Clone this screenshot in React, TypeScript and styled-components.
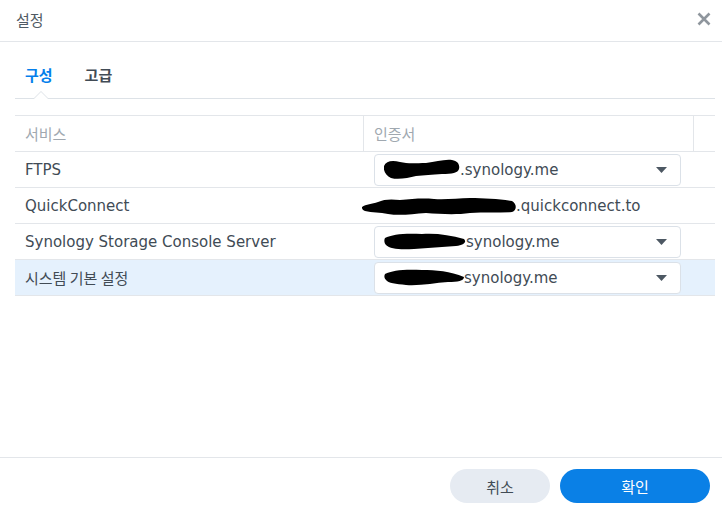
import * as React from "react";
import styled, { createGlobalStyle } from "styled-components";

const GlobalStyle = createGlobalStyle`
  html, body {
    margin: 0;
    padding: 0;
    background: #ffffff;
  }
  body {
    font-family: "DejaVu Sans", "Noto Sans CJK KR", sans-serif;
    color: #414b55;
  }
`;

const Dialog = styled.div`
  width: 722px;
  height: 507px;
  display: flex;
  flex-direction: column;
  background: #ffffff;
  box-sizing: border-box;
`;

const TitleBar = styled.div`
  height: 42px;
  box-sizing: border-box;
  border-bottom: 1px solid #e3e6ea;
  display: flex;
  align-items: center;
  justify-content: space-between;
  padding: 0 10px 3px 16px;
`;

const Title = styled.div`
  font-family: "Noto Sans CJK KR", sans-serif;
  font-size: 15px;
  color: #505a64;
`;

const CloseButton = styled.button`
  border: none;
  background: none;
  padding: 0;
  width: 16px;
  height: 16px;
  display: flex;
  align-items: center;
  justify-content: center;
  cursor: pointer;
`;

const Body = styled.div`
  flex: 1;
  padding: 0 7px 0 15px;
  display: flex;
  flex-direction: column;
`;

const TabBar = styled.div`
  height: 57px;
  box-sizing: border-box;
  border-bottom: 1px solid #dde2e7;
  display: flex;
  align-items: flex-end;
`;

const Tab = styled.div<{ $active?: boolean }>`
  position: relative;
  font-family: "Noto Sans CJK KR", sans-serif;
  font-size: 15px;
  font-weight: 600;
  color: ${(p) => (p.$active ? "#057feb" : "#414b55")};
  padding: 0 22px 0 10px;
  height: 33px;
  line-height: 20px;
  cursor: pointer;
`;

const Caret = styled.span`
  position: absolute;
  left: 18px;
  bottom: -1px;
  width: 0;
  height: 0;
  border-left: 8px solid transparent;
  border-right: 8px solid transparent;
  border-bottom: 8px solid #dde2e7;

  &::after {
    content: "";
    position: absolute;
    left: -7px;
    top: 1px;
    border-left: 7px solid transparent;
    border-right: 7px solid transparent;
    border-bottom: 7px solid #ffffff;
  }
`;

const Grid = styled.div`
  margin-top: 16px;
  border-top: 1px solid #e3e6ea;
`;

const Row = styled.div<{ $selected?: boolean }>`
  display: grid;
  grid-template-columns: 349px 330px 1fr;
  height: 36px;
  box-sizing: border-box;
  border-bottom: 1px solid #e3e6ea;
  background: ${(p) => (p.$selected ? "#e5f1fd" : "transparent")};
`;

const Cell = styled.div<{ $divider?: boolean; $header?: boolean; $flush?: boolean }>`
  display: flex;
  align-items: center;
  padding-left: ${(p) => (p.$flush ? 0 : 10)}px;
  font-size: 15px;
  color: ${(p) => (p.$header ? "#a0a8b0" : "#414b55")};
  font-family: ${(p) =>
    p.$header ? '"Noto Sans CJK KR", sans-serif' : '"DejaVu Sans", "Noto Sans CJK KR", sans-serif'};
  border-right: ${(p) => (p.$divider ? "1px solid #e3e6ea" : "none")};
  white-space: nowrap;
`;

const KoText = styled.span`
  font-family: "Noto Sans CJK KR", sans-serif;
  font-size: 15px;
`;

const Select = styled.div`
  width: 307px;
  height: 32px;
  box-sizing: border-box;
  border: 1px solid #dbe1e8;
  border-radius: 4px;
  background: #ffffff;
  display: flex;
  align-items: center;
  padding: 0 13px 0 9px;
`;

const SelectValue = styled.div`
  flex: 1;
  display: flex;
  align-items: center;
  font-size: 15px;
  color: #414b55;
`;

const Footer = styled.div`
  height: 50px;
  box-sizing: border-box;
  border-top: 1px solid #e3e6ea;
  display: flex;
  justify-content: flex-end;
  align-items: flex-start;
  gap: 10px;
  padding: 11px 12px 0 0;
`;

const Button = styled.button<{ $primary?: boolean; $w: number }>`
  width: ${(p) => p.$w}px;
  height: 34px;
  border: none;
  border-radius: 17px;
  font-family: "Noto Sans CJK KR", sans-serif;
  font-size: 15px;
  cursor: pointer;
  background: ${(p) => (p.$primary ? "#0a80e6" : "#e6ebf2")};
  color: ${(p) => (p.$primary ? "#ffffff" : "#414b55")};
`;

// redaction scribbles over the host names
const blobPaths = [
  "M0 7 C2 2 8 1 16 3 C24 5 32 4 42 4 C52 3 60 0 68 1 C74 2 76 6 75 10 C74 14 68 15 58 15 C48 16 40 16 32 17 C24 19 14 21 7 19 C2 17 -1 12 0 7 Z",
  "M0 11 C4 8 10 8 16 6 C22 3 30 3 38 4 C50 3 60 2 72 3 C84 4 96 2 108 2 C122 2 138 3 150 5 C155 8 155 14 150 16 C136 17 122 16 108 17 C94 19 78 18 64 17 C50 18 38 20 26 18 C18 16 10 17 3 15 C0 14 0 12 0 11 Z",
  "M1 5 C8 1 22 0 38 1 C52 0 66 2 80 6 C83 9 80 12 72 13 C58 14 44 15 30 16 C16 17 6 16 2 12 C0 10 0 7 1 5 Z",
  "M1 5 C8 1 22 0 38 1 C52 1 66 2 80 8 C80 12 74 13 64 13 C50 14 36 17 22 16 C12 15 4 14 2 11 C0 9 0 7 1 5 Z",
];

const Blob = ({ w, h, variant }: { w: number; h: number; variant: number }) => (
  <svg width={w} height={h} viewBox={`0 0 ${w} ${h}`} style={{ flexShrink: 0 }}>
    <path d={blobPaths[variant]} fill="#000000" />
  </svg>
);

const Arrow = () => (
  <svg width="11" height="6" viewBox="0 0 11 6">
    <path d="M0 0 L11 0 L5.5 6 Z" fill="#4d5863" />
  </svg>
);

const CloseIcon = () => (
  <svg width="14" height="14" viewBox="0 0 14 14">
    <path d="M1.5 1.5 L12.5 12.5 M12.5 1.5 L1.5 12.5" stroke="#8f969d" strokeWidth="2.6" />
  </svg>
);

type Entry = {
  service: string;
  ko?: boolean;
  select: boolean;
  blobW: number;
  blobH: number;
  variant: number;
  suffix: string;
  selected?: boolean;
};

const rows: Entry[] = [
  { service: "FTPS", select: true, blobW: 76, blobH: 21, variant: 0, suffix: ".synology.me" },
  { service: "QuickConnect", select: false, blobW: 154, blobH: 20, variant: 1, suffix: ".quickconnect.to" },
  { service: "Synology Storage Console Server", select: true, blobW: 82, blobH: 17, variant: 2, suffix: "synology.me" },
  { service: "시스템 기본 설정", ko: true, select: true, blobW: 80, blobH: 17, variant: 3, suffix: "synology.me", selected: true },
];

export default function App() {
  return (
    <>
      <GlobalStyle />
      <Dialog>
        <TitleBar>
          <Title>설정</Title>
          <CloseButton aria-label="닫기">
            <CloseIcon />
          </CloseButton>
        </TitleBar>
        <Body>
          <TabBar>
            <Tab $active>
              구성
              <Caret />
            </Tab>
            <Tab>고급</Tab>
          </TabBar>
          <Grid>
            <Row>
              <Cell $header $divider>서비스</Cell>
              <Cell $header $divider>인증서</Cell>
              <Cell />
            </Row>
            {rows.map((r) => (
              <Row key={r.service} $selected={r.selected}>
                <Cell>{r.ko ? <KoText>{r.service}</KoText> : r.service}</Cell>
                {r.select ? (
                  <Cell>
                    <Select>
                      <SelectValue>
                        <Blob w={r.blobW} h={r.blobH} variant={r.variant} />
                        {r.suffix}
                      </SelectValue>
                      <Arrow />
                    </Select>
                  </Cell>
                ) : (
                  <Cell $flush style={{ marginLeft: -2 }}>
                    <Blob w={r.blobW} h={r.blobH} variant={r.variant} />
                    {r.suffix}
                  </Cell>
                )}
                <Cell />
              </Row>
            ))}
          </Grid>
        </Body>
        <Footer>
          <Button $w={100}>취소</Button>
          <Button $primary $w={150}>확인</Button>
        </Footer>
      </Dialog>
    </>
  );
}
